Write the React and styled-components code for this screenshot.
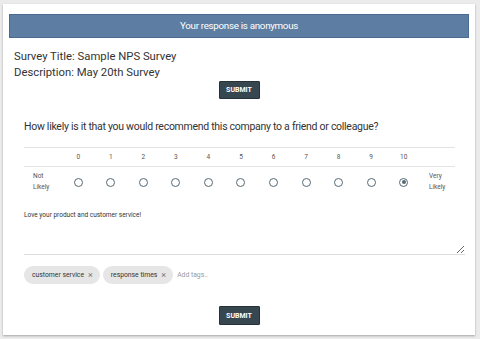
import React from "react";
import styled, { createGlobalStyle } from "styled-components";

const Global = createGlobalStyle`
  html, body { margin: 0; padding: 0; background: #ebebeb; }
  body { font-family: Roboto, "Liberation Sans", Arial, sans-serif; color: #333; }
  * { box-sizing: border-box; }
`;

const Page = styled.div`
  padding: 4px 5px 4px 3px;
`;

const Card = styled.div`
  background: #fff;
  width: 472px;
  height: 331px;
  padding: 10px 6px 10px 6px;
  box-shadow: 0 1px 2px rgba(0, 0, 0, 0.3);
  display: flex;
  flex-direction: column;
`;

const Banner = styled.div`
  height: 24px;
  background: #5d7da2;
  border: 1px solid #4b6a90;
  color: #fff;
  font-size: 9.8px;
  letter-spacing: -0.3px;
  display: flex;
  align-items: center;
  justify-content: center;
`;

const Info = styled.div`
  margin-top: 11px;
  padding-left: 5px;
  font-size: 11.3px;
  line-height: 16px;
  color: #333;
`;

const Button = styled.button`
  align-self: center;
  width: 41px;
  height: 19px;
  background: #37474f;
  border: 1px solid #263238;
  border-radius: 1px;
  color: #fff;
  font-family: Roboto, "Liberation Sans", Arial, sans-serif;
  font-weight: 700;
  font-size: 7px;
  padding: 0;
  display: flex;
  align-items: center;
  justify-content: center;
  margin-top: ${(p) => p.$mt || 0}px;
`;

const Section = styled.div`
  padding-left: 15px;
  padding-right: 4px;
  display: flex;
  flex-direction: column;
`;

const Question = styled.div`
  margin-top: 20px;
  font-size: 10.5px;
  letter-spacing: -0.28px;
  line-height: 16px;
  color: #333;
`;

const Scale = styled.div`
  margin-top: 12px;
  width: 431px;
  display: grid;
  grid-template-columns: 38px repeat(11, 1fr) 35px;
  border-top: 1px solid #e3e3e3;
`;

const HeadCell = styled.div`
  height: 19px;
  border-bottom: 1px solid #e3e3e3;
  display: flex;
  align-items: center;
  justify-content: center;
  font-size: 6.5px;
  color: #555;
`;

const BodyCell = styled.div`
  height: 30px;
  display: flex;
  align-items: center;
  justify-content: ${(p) => (p.$edge ? "flex-start" : "center")};
  padding-left: ${(p) => (p.$edge ? p.$pl : 0)}px;
  font-size: 6.5px;
  line-height: 11px;
  color: #555;
`;

const Radio = styled.span`
  width: 9px;
  height: 9px;
  border-radius: 50%;
  border: 1.3px solid #546873;
  display: flex;
  align-items: center;
  justify-content: center;
  &::after {
    content: "";
    width: 4px;
    height: 4px;
    border-radius: 50%;
    background: ${(p) => (p.$on ? "#546873" : "transparent")};
  }
`;

const Comment = styled.textarea`
  margin-top: 8px;
  width: 441px;
  height: 50px;
  border: none;
  border-bottom: 1px solid #dcdcdc;
  padding: 5px 0 0 0;
  font-family: Roboto, "Liberation Sans", Arial, sans-serif;
  font-size: 6.5px;
  line-height: 10px;
  color: #333;
  resize: vertical;
  outline: none;
`;

const Tags = styled.div`
  margin-top: 11px;
  display: flex;
  align-items: center;
  gap: 3px;
`;

const Chip = styled.span`
  height: 18px;
  border-radius: 9px;
  background: #e6e6e6;
  padding: 0 7px 0 8px;
  display: flex;
  align-items: center;
  gap: 4px;
  font-size: 6.8px;
  color: #333;
`;

const Close = styled.span`
  color: #777;
  font-size: 9px;
  line-height: 1;
`;

const AddTags = styled.span`
  font-size: 6.8px;
  color: #999;
  margin-left: 1px;
`;

export default function App() {
  const nums = Array.from({ length: 11 }, (_, i) => i);
  return (
    <Page>
      <Global />
      <Card>
        <Banner>Your response is anonymous</Banner>
        <Info>
          <div>Survey Title: Sample NPS Survey</div>
          <div>Description: May 20th Survey</div>
        </Info>
        <Button>SUBMIT</Button>
        <Section>
          <Question>
            How likely is it that you would recommend this company to a friend or colleague?
          </Question>
          <Scale>
            <HeadCell />
            {nums.map((n) => (
              <HeadCell key={n}>{n}</HeadCell>
            ))}
            <HeadCell />
            <BodyCell $edge $pl={9}>
              Not
              <br />
              Likely
            </BodyCell>
            {nums.map((n) => (
              <BodyCell key={n}>
                <Radio $on={n === 10} />
              </BodyCell>
            ))}
            <BodyCell $edge $pl={9}>
              Very
              <br />
              Likely
            </BodyCell>
          </Scale>
          <Comment defaultValue="Love your product and customer service!" />
          <Tags>
            <Chip>
              customer service <Close>×</Close>
            </Chip>
            <Chip>
              response times <Close>×</Close>
            </Chip>
            <AddTags>Add tags..</AddTags>
          </Tags>
        </Section>
        <Button $mt={22}>SUBMIT</Button>
      </Card>
    </Page>
  );
}
